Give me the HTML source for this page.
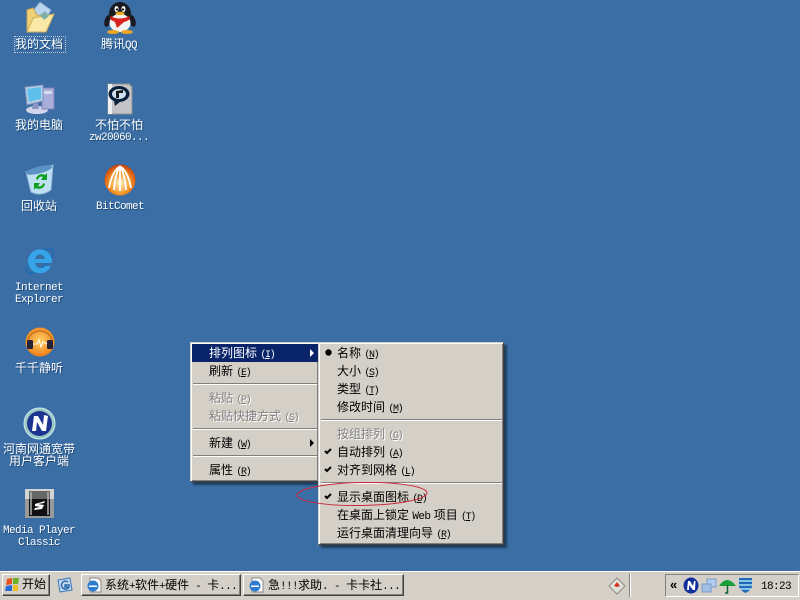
<!DOCTYPE html>
<html><head><meta charset="utf-8"><style>
*{box-sizing:border-box}
html,body{margin:0;padding:0;width:800px;height:600px;overflow:hidden;background:#3a6ea5}
body{position:relative;font:12px/12px "Liberation Sans","WenQuanYi Zen Hei","Noto Sans CJK SC",sans-serif}
.t{position:absolute;white-space:pre;line-height:12px;height:12px}
.d{color:#fff;text-align:center;text-shadow:1px 1px 0 #1f4a78;width:100px}
.m{font-family:"Liberation Mono","WenQuanYi Zen Hei",monospace;font-size:11px;letter-spacing:-.6px}
.k{color:#000}
.g{color:#808080;text-shadow:1px 1px 0 #fff}
.u{font-family:"Liberation Mono",monospace;font-size:10px;letter-spacing:-1.4px}
.u i{font-style:normal;text-decoration:underline}
.l{font-family:"Liberation Mono",monospace;font-size:11px;letter-spacing:-.6px}
svg{position:absolute;overflow:visible}
.menu{position:absolute;background:#d4d0c8;border:1px solid;border-color:#d4d0c8 #404040 #404040 #d4d0c8;box-shadow:inset 1px 1px 0 #fff,inset -1px -1px 0 #808080,3px 3px 2px rgba(0,0,0,.45)}
.sep{position:absolute;height:2px;background:#808080;border-bottom:1px solid #fff}
.btn{position:absolute;background:#d4d0c8;border:1px solid;border-color:#fff #404040 #404040 #fff;box-shadow:inset -1px -1px 0 #808080}
</style></head><body>

<!-- desktop icons -->
<svg style="left:25px;top:1px" width="30" height="32" viewBox="0 0 30 32"><path d="M6 12 L15 1 L26 9 L20 20Z" fill="#b9d4ee" stroke="#7fa3c8"/><path d="M2 9 L8 7 L12 14 L26 17 L21 31 L2 31Z" fill="#f0d078" stroke="#c9a650"/><path d="M2 31 L8 17 L29 13 L21 31Z" fill="#f9e8a6" stroke="#d0ae5c"/><path d="M15 14 L20 10 L24 15 L19 19Z" fill="#7fb0a8"/></svg>
<div class="t d" style="left:-11px;top:38px">我的文档</div>
<div style="position:absolute;left:15px;top:37px;width:50px;height:15px;outline:1px dotted #b8c8da"></div>

<svg style="left:103px;top:1px" width="34" height="33" viewBox="0 0 34 33"><ellipse cx="17" cy="13" rx="11" ry="12" fill="#1a1a22"/><ellipse cx="4.500" cy="20" rx="3" ry="6" fill="#1a1a22" transform="rotate(15 4.500 20)"/><ellipse cx="29.500" cy="20" rx="3" ry="6" fill="#1a1a22" transform="rotate(-15 29.500 20)"/><ellipse cx="17" cy="22" rx="10.500" ry="9" fill="#f4f4f4"/><path d="M7 15 Q17 20 27 15 L26 19 Q22 21 21 21 L14 27 L12 21 L8 19Z" fill="#d8231f"/><ellipse cx="13.500" cy="8" rx="2" ry="3" fill="#fff"/><ellipse cx="20.500" cy="8" rx="2" ry="3" fill="#fff"/><circle cx="14" cy="8.500" r="1.100" fill="#000"/><circle cx="20" cy="8.500" r="1.100" fill="#000"/><ellipse cx="17" cy="12.500" rx="4.500" ry="1.800" fill="#f0b020"/><ellipse cx="10" cy="31" rx="6" ry="2" fill="#eda61f"/><ellipse cx="24" cy="31" rx="6" ry="2" fill="#eda61f"/></svg>
<div class="t d" style="left:69px;top:38px">腾讯<span class="l">QQ</span></div>

<svg style="left:24px;top:83px" width="32" height="32" viewBox="0 0 32 32"><ellipse cx="13" cy="27" rx="11" ry="4" fill="#d3d6ea"/><rect x="18" y="5" width="12" height="21" fill="#a9aeda" stroke="#7d84b8"/><rect x="20" y="8" width="8" height="3" fill="#d8dcf2"/><path d="M1 4 L19 2 L19 18 L3 22Z" fill="#b9cde6" stroke="#7d90b8"/><path d="M3 6 L17 4 L17 16 L5 19Z" fill="#5fc0ee"/><path d="M9 21 L14 20 L15 26 L8 26Z" fill="#8d95c8"/></svg>
<div class="t d" style="left:-11px;top:119px">我的电脑</div>

<svg style="left:104px;top:83px" width="32" height="32" viewBox="0 0 32 32"><path d="M4 1 L25 1 L28 4 L28 31 L4 31Z" fill="#c4c4c8" stroke="#8e8e92"/><path d="M4 1 L8 1 L8 31 L4 31Z" fill="#eeeeee"/><ellipse cx="15" cy="11" rx="10.500" ry="8" fill="#0a2038"/><ellipse cx="15" cy="11" rx="7" ry="5" fill="#cfe0ee"/><path d="M10 18 L11 23 L17 18Z" fill="#0a2038"/><path d="M12 15 L12 8 L19 7 L19 10 L15 10 L15 15Z" fill="#1a1a1a"/></svg>
<div class="t d" style="left:69px;top:119px">不怕不怕</div>
<div class="t d m" style="left:69px;top:132px">zw20060...</div>

<svg style="left:25px;top:164px" width="30" height="32" viewBox="0 0 30 32"><path d="M1 8 L28 1 L26 26 Q16 33 6 28Z" fill="#bfe0f2" stroke="#8db4d6"/><ellipse cx="14" cy="6" rx="13.500" ry="3.500" fill="#5d93c4" transform="rotate(-14 14 6)"/><path d="M11 15 A6 6 0 0 1 20 11 L22 9 L22 16 L16 16 L18 13 A3.500 3.500 0 0 0 13 16Z" fill="#10a020"/><path d="M20 20 A6 6 0 0 1 11 24 L9 26 L9 19 L15 19 L13 22 A3.500 3.500 0 0 0 18 19Z" fill="#10a020"/></svg>
<div class="t d" style="left:-11px;top:200px">回收站</div>

<svg style="left:104px;top:164px" width="32" height="32" viewBox="0 0 32 32"><defs><radialGradient id="bc" cx=".5" cy=".6" r=".6"><stop offset="0" stop-color="#fff3c8"/><stop offset=".55" stop-color="#f59a2c"/><stop offset="1" stop-color="#c83c08"/></radialGradient></defs><circle cx="16" cy="16" r="15.500" fill="url(#bc)"/><path d="M5 24 Q8 8 15 3 M10 26 Q11 10 16 2 M16 27 L16 2 M22 26 Q21 10 16 2 M27 24 Q24 8 17 3" stroke="#fff" stroke-width="1.800" fill="none"/></svg>
<div class="t d m" style="left:70px;top:201px">BitComet</div>

<svg style="left:24px;top:245px" width="32" height="32" viewBox="0 0 32 32"><ellipse cx="16" cy="16" rx="17" ry="6.500" fill="none" stroke="#1f6cb4" stroke-width="1.600" transform="rotate(-42 16 16)"/><path d="M27 21 A12 12 0 1 1 27.500 13 Q28 15 28 18 L11 18 Q12 23 16.500 23 Q20 23 21 21Z M11 14 L21 14 Q20 9.500 16 9.500 Q12 9.500 11 14Z" fill="#35a4e8" fill-rule="evenodd"/></svg>
<div class="t d m" style="left:-11px;top:282px">Internet</div>
<div class="t d m" style="left:-11px;top:294px">Explorer</div>

<svg style="left:24px;top:326px" width="32" height="32" viewBox="0 0 32 32"><defs><radialGradient id="tt" cx=".5" cy=".45" r=".6"><stop offset="0" stop-color="#ffd068"/><stop offset="1" stop-color="#ee7a10"/></radialGradient></defs><circle cx="16" cy="16" r="14.500" fill="url(#tt)"/><path d="M4 16 A12 11 0 0 1 28 16" stroke="#c87820" fill="none" stroke-width="1.500"/><rect x="3" y="14" width="6" height="9" rx="1.500" fill="#23233c"/><rect x="23" y="14" width="6" height="9" rx="1.500" fill="#23233c"/><path d="M9 18 L13 18 L15 14 L17 21 L19 16 L23 18" stroke="#fff" fill="none"/></svg>
<div class="t d" style="left:-11px;top:362px">千千静听</div>

<svg style="left:23px;top:407px" width="33" height="33" viewBox="0 0 33 33"><circle cx="16.500" cy="16.500" r="15.500" fill="#9cc8c4" stroke="#d0ecec"/><circle cx="16.500" cy="16.500" r="12.500" fill="#1c3590"/><path d="M9 24 L11 9 L15 9 L20 18 L21 8 L25 9 L23 24 L19 24 L14 15 L13 24Z" fill="#fff"/></svg>
<div class="t d" style="left:-11px;top:443px">河南网通宽带</div>
<div class="t d" style="left:-11px;top:455px">用户客户端</div>

<svg style="left:25px;top:489px" width="29" height="29" viewBox="0 0 29 29"><rect width="29" height="29" fill="#9a9a9a"/><rect x="0" y="0" width="29" height="10" fill="#d4d4d4"/><rect x="4" y="2" width="21" height="25" fill="#111"/><path d="M4 2 H25 V10 H4Z" fill="#666"/><rect x="5" y="3" width="2" height="23" fill="#bbb" opacity=".7"/><rect x="22" y="3" width="2" height="23" fill="#bbb" opacity=".7"/><path d="M10 15 L20 12 L19 14 L13 15 L19 16 L17 20 L9 21 L10 19 L15 18 L10 17Z" fill="#fff"/></svg>
<div class="t d m" style="left:-11px;top:525px">Media Player</div>
<div class="t d m" style="left:-11px;top:537px">Classic</div>

<!-- left menu -->
<div class="menu" style="left:190px;top:342px;width:129px;height:140px"></div>
<div style="position:absolute;left:192px;top:344px;width:126px;height:18px;background:#0a246a"></div>
<div class="t" style="left:209px;top:347px;color:#fff">排列图标 <span class="u">(<i>I</i>)</span></div>
<svg style="left:310px;top:349px" width="5" height="8"><path d="M0 0 L4 4 L0 8Z" fill="#fff"/></svg>
<div class="t k" style="left:209px;top:365px">刷新 <span class="u">(<i>E</i>)</span></div>
<div class="sep" style="left:193px;top:383px;width:124px"></div>
<div class="t g" style="left:209px;top:392px">粘贴 <span class="u">(<i>P</i>)</span></div>
<div class="t g" style="left:209px;top:410px">粘贴快捷方式 <span class="u">(<i>S</i>)</span></div>
<div class="sep" style="left:193px;top:428px;width:124px"></div>
<div class="t k" style="left:209px;top:437px">新建 <span class="u">(<i>W</i>)</span></div>
<svg style="left:310px;top:439px" width="5" height="8"><path d="M0 0 L4 4 L0 8Z" fill="#000"/></svg>
<div class="sep" style="left:193px;top:455px;width:124px"></div>
<div class="t k" style="left:209px;top:464px">属性 <span class="u">(<i>R</i>)</span></div>

<!-- right menu -->
<div class="menu" style="left:318px;top:342px;width:186px;height:203px"></div>
<svg style="left:325px;top:349px" width="7" height="7"><circle cx="3.500" cy="3.500" r="3.200" fill="#000"/></svg>
<div class="t k" style="left:337px;top:347px">名称 <span class="u">(<i>N</i>)</span></div>
<div class="t k" style="left:337px;top:365px">大小 <span class="u">(<i>S</i>)</span></div>
<div class="t k" style="left:337px;top:383px">类型 <span class="u">(<i>T</i>)</span></div>
<div class="t k" style="left:337px;top:401px">修改时间 <span class="u">(<i>M</i>)</span></div>
<div class="sep" style="left:321px;top:419px;width:181px"></div>
<div class="t g" style="left:337px;top:428px">按组排列 <span class="u">(<i>G</i>)</span></div>
<svg style="left:324px;top:448px" width="8" height="7"><path d="M1 3 L3 5 L7 1" stroke="#000" stroke-width="2" fill="none"/></svg>
<div class="t k" style="left:337px;top:446px">自动排列 <span class="u">(<i>A</i>)</span></div>
<svg style="left:324px;top:466px" width="8" height="7"><path d="M1 3 L3 5 L7 1" stroke="#000" stroke-width="2" fill="none"/></svg>
<div class="t k" style="left:337px;top:464px">对齐到网格 <span class="u">(<i>L</i>)</span></div>
<div class="sep" style="left:321px;top:482px;width:181px"></div>
<svg style="left:324px;top:493px" width="8" height="7"><path d="M1 3 L3 5 L7 1" stroke="#000" stroke-width="2" fill="none"/></svg>
<div class="t k" style="left:337px;top:491px">显示桌面图标 <span class="u">(<i>D</i>)</span></div>
<div class="t k" style="left:337px;top:509px">在桌面上锁定 <span class="l">Web</span> 项目 <span class="u">(<i>T</i>)</span></div>
<div class="t k" style="left:337px;top:527px">运行桌面清理向导 <span class="u">(<i>R</i>)</span></div>

<svg style="left:0;top:0" width="800" height="600"><ellipse cx="362" cy="494" rx="65" ry="11.500" fill="none" stroke="#c8283c" stroke-width="1" transform="rotate(-1 362 494)"/></svg>

<!-- taskbar -->
<div style="position:absolute;left:0;top:571px;width:800px;height:29px;background:#d4d0c8;box-shadow:inset 0 1px 0 #fff"></div>
<div class="btn" style="left:2px;top:574px;width:48px;height:22px"></div>
<svg style="left:5px;top:577px" width="15" height="15" viewBox="0 0 15 15"><path d="M2 2 L7 1 L7 7 L1 8Z" fill="#e8501c"/><path d="M8 1 L14 1 L13 7 L8 7Z" fill="#6cb02c"/><path d="M1 9 L7 8 L7 14 L0 14Z" fill="#2c6cd8"/><path d="M8 8 L13 8 L13 14 L8 14Z" fill="#f0c020"/></svg>
<div class="t k" style="left:22px;top:578px">开始</div>
<svg style="left:57px;top:577px" width="16" height="16" viewBox="0 0 16 16"><path d="M1 3 L13 1 L15 13 L3 15Z" fill="#c4d8f0" stroke="#3878b8"/><path d="M11 5 A4 4 0 1 0 12 10 L8 10 L8 8 L13 8" stroke="#2868a8" stroke-width="1.500" fill="none"/></svg>

<div class="btn" style="left:81px;top:574px;width:160px;height:22px"></div>
<svg style="left:86px;top:577px" width="16" height="16" viewBox="0 0 16 16"><path d="M4 1 L12 1 L15 4 L15 15 L4 15Z" fill="#fff" stroke="#888"/><circle cx="7" cy="9" r="5.500" fill="#2c7cd0"/><rect x="3" y="8.500" width="8" height="1.500" fill="#fff"/></svg>
<div class="t k" style="left:105px;top:579px">系统<span class="l">+</span>软件<span class="l">+</span>硬件<span class="l"> - </span>卡<span class="l">...</span></div>

<div class="btn" style="left:243px;top:574px;width:161px;height:22px"></div>
<svg style="left:248px;top:577px" width="16" height="16" viewBox="0 0 16 16"><path d="M4 1 L12 1 L15 4 L15 15 L4 15Z" fill="#fff" stroke="#888"/><circle cx="7" cy="9" r="5.500" fill="#2c7cd0"/><rect x="3" y="8.500" width="8" height="1.500" fill="#fff"/></svg>
<div class="t k" style="left:268px;top:579px">急<span class="l">!!!</span>求助<span class="l">. - </span>卡卡社<span class="l">...</span></div>

<svg style="left:609px;top:578px" width="16" height="16" viewBox="0 0 16 16"><path d="M8 0 L16 8 L8 16 L0 8Z" fill="#e0e0dc" stroke="#908c84"/><path d="M5 8 L8 4 L11 8 L8 9Z" fill="#d83020"/></svg>
<div style="position:absolute;left:629px;top:574px;width:2px;height:23px;background:#fff;border-left:1px solid #808080"></div>

<div style="position:absolute;left:665px;top:574px;width:134px;height:23px;border:1px solid;border-color:#808080 #fff #fff #808080"></div>
<div class="t" style="left:670px;top:579px;font:bold 13px/12px 'Liberation Sans',sans-serif;color:#000">«</div>
<svg style="left:683px;top:577px" width="16" height="17" viewBox="0 0 16 17"><ellipse cx="8" cy="8.500" rx="7.500" ry="8" fill="#10309a"/><path d="M4 13 L5 4 L7 4 L10 9 L11 4 L12.500 4 L12 13 L10 13 L6 8 L6 13Z" fill="#fff"/></svg>
<svg style="left:701px;top:578px" width="16" height="16" viewBox="0 0 16 16"><rect x="6" y="1" width="9" height="8" fill="#b4cdec" stroke="#7a9cc8"/><rect x="1" y="6" width="9" height="8" fill="#a0bee4" stroke="#7a9cc8"/></svg>
<svg style="left:719px;top:577px" width="17" height="17" viewBox="0 0 17 17"><path d="M0 9 Q8 -3 17 9Z" fill="#18a038"/><path d="M8.500 8 L8.500 16 L6 16" stroke="#106030" fill="none" stroke-width="1.500"/></svg>
<svg style="left:738px;top:577px" width="15" height="17" viewBox="0 0 15 17"><path d="M1 1 L14 1 L14 10 Q12 14 7.500 16 Q3 14 1 10Z" fill="#2068b8"/><path d="M1 4 H14 M1 8 H14 M2 12 H13" stroke="#a8e0f0" stroke-width="1.500"/></svg>
<div class="t k l" style="left:761px;top:581px">18:23</div>

</body></html>
